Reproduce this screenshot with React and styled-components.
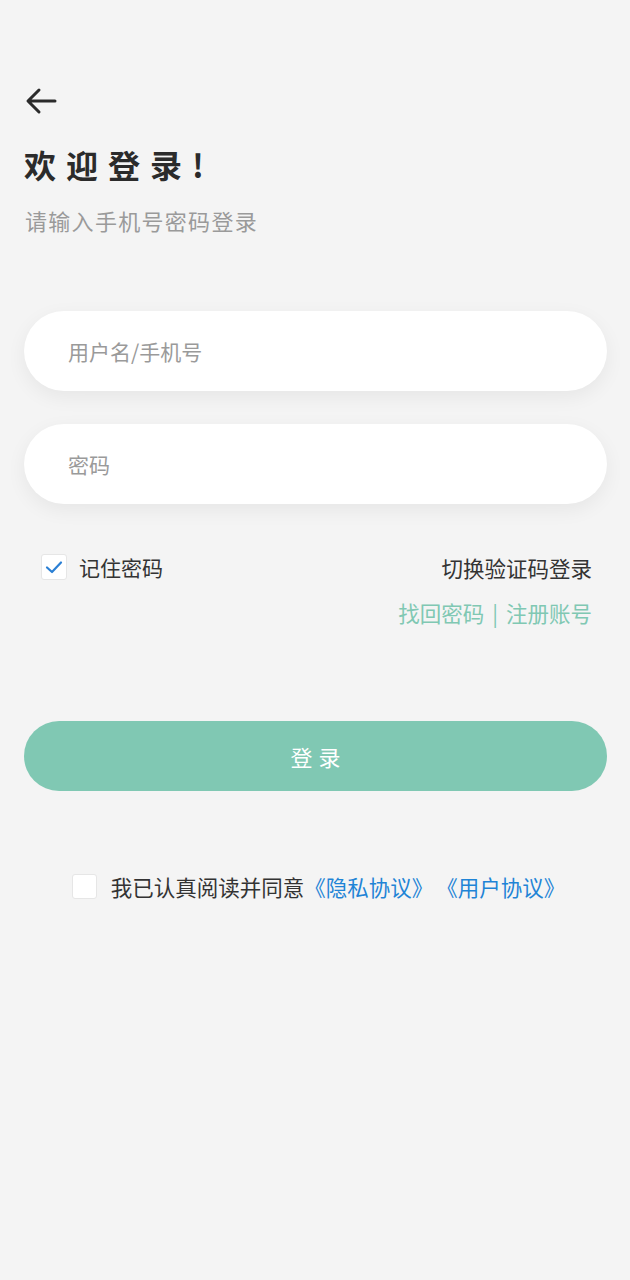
import React, { useState } from "react";
import styled, { createGlobalStyle } from "styled-components";

const Global = createGlobalStyle`
  html, body { margin: 0; padding: 0; background: #f4f4f4; }
  body { font-family: "Noto Sans CJK SC", "Noto Sans", sans-serif; }
  * { box-sizing: border-box; }
`;

const Page = styled.div`
  min-height: 1280px;
  background: #f4f4f4;
  padding: 86px 23px 0 24px;
  display: flex;
  flex-direction: column;
`;

const BackButton = styled.button`
  width: 36px;
  height: 30px;
  padding: 0;
  margin-left: 1px;
  border: 0;
  background: transparent;
  display: flex;
  align-items: center;
  justify-content: flex-start;
  cursor: pointer;
`;

const Title = styled.h1`
  margin: 28px 0 0 0;
  font-size: 32px;
  line-height: 40px;
  font-weight: 700;
  letter-spacing: 10px;
  color: #2b2b2b;
`;

const Subtitle = styled.p`
  margin: 21px 0 0 1px;
  font-size: 22px;
  line-height: 30px;
  letter-spacing: 1.3px;
  color: #9a9a9a;
`;

const Form = styled.div`
  margin-top: 76px;
  display: flex;
  flex-direction: column;
  gap: 33px;
`;

const Field = styled.input`
  width: 100%;
  height: 80px;
  border: 0;
  border-radius: 40px;
  background: #fff;
  padding: 0 44px;
  font-family: inherit;
  font-size: 21px;
  color: #333;
  outline: none;
  box-shadow: 0 6px 20px rgba(0, 0, 0, 0.06);
  &::placeholder { color: #9a9a9a; }
`;

const Options = styled.div`
  margin-top: 48px;
  display: flex;
  justify-content: space-between;
  align-items: flex-start;
`;

const CheckLabel = styled.label`
  display: flex;
  align-items: center;
  gap: ${p => p.$gap || 14}px;
  margin-left: ${p => p.$indent || 0}px;
  font-size: ${p => p.$font || 21}px;
  color: #333;
  cursor: pointer;
`;

const Box = styled.span`
  width: ${p => p.$size}px;
  height: ${p => p.$size}px;
  border-radius: 3px;
  background: #fff;
  border: 1px solid #e6e6e6;
  display: flex;
  align-items: center;
  justify-content: center;
  flex-shrink: 0;
`;

const RightLinks = styled.div`
  display: flex;
  flex-direction: column;
  align-items: flex-end;
  gap: 14px;
  margin-right: 15px;
`;

const SwitchLink = styled.span`
  font-size: 21.5px;
  line-height: 32px;
  color: #333;
`;

const GreenLinks = styled.div`
  font-size: 21.5px;
  line-height: 30px;
  color: #80c8b3;
  display: flex;
  gap: 8px;
`;

const Submit = styled.button`
  margin-top: 93px;
  width: 100%;
  height: 70px;
  border: 0;
  border-radius: 35px;
  background: #80c8b3;
  color: #fff;
  font-family: inherit;
  font-size: 22px;
  letter-spacing: 6px;
  text-indent: 6px;
  cursor: pointer;
`;

const Agreement = styled.div`
  margin-top: 80px;
  display: flex;
  justify-content: center;
  padding-left: 6px;
`;

const AgreeText = styled.span`
  display: flex;
  gap: 3px;
`;

const Blue = styled.a`
  color: #1f84d6;
  text-decoration: none;
`;

const Check = () => (
  <svg width="18" height="14" viewBox="0 0 18 14">
    <path d="M2 7.5 L7 12 L16 2.5" fill="none" stroke="#2a7fd4" strokeWidth="2.2" strokeLinecap="round" strokeLinejoin="round" />
  </svg>
);

export default function App() {
  const [remember, setRemember] = useState(true);
  const [agree, setAgree] = useState(false);
  return (
    <>
      <Global />
      <Page>
        <BackButton aria-label="返回">
          <svg width="32" height="28" viewBox="0 0 32 28">
            <path d="M30 14 H4 M14 3 L3 14 L14 25" fill="none" stroke="#2b2b2b" strokeWidth="3" strokeLinecap="round" strokeLinejoin="round" />
          </svg>
        </BackButton>
        <Title>欢迎登录!</Title>
        <Subtitle>请输入手机号密码登录</Subtitle>
        <Form>
          <Field placeholder="用户名/手机号" />
          <Field type="password" placeholder="密码" />
        </Form>
        <Options>
          <CheckLabel $indent={17} $gap={12} onClick={() => setRemember(!remember)}>
            <Box $size={26}>{remember && <Check />}</Box>
            记住密码
          </CheckLabel>
          <RightLinks>
            <SwitchLink>切换验证码登录</SwitchLink>
            <GreenLinks>
              <span>找回密码</span>
              <span>|</span>
              <span>注册账号</span>
            </GreenLinks>
          </RightLinks>
        </Options>
        <Submit>登录</Submit>
        <Agreement>
          <CheckLabel $font={21.5} onClick={() => setAgree(!agree)}>
            <Box $size={25}>{agree && <Check />}</Box>
            <AgreeText>
              <span>
                我已认真阅读并同意<Blue>《隐私协议》</Blue>
              </span>
              <Blue>《用户协议》</Blue>
            </AgreeText>
          </CheckLabel>
        </Agreement>
      </Page>
    </>
  );
}
